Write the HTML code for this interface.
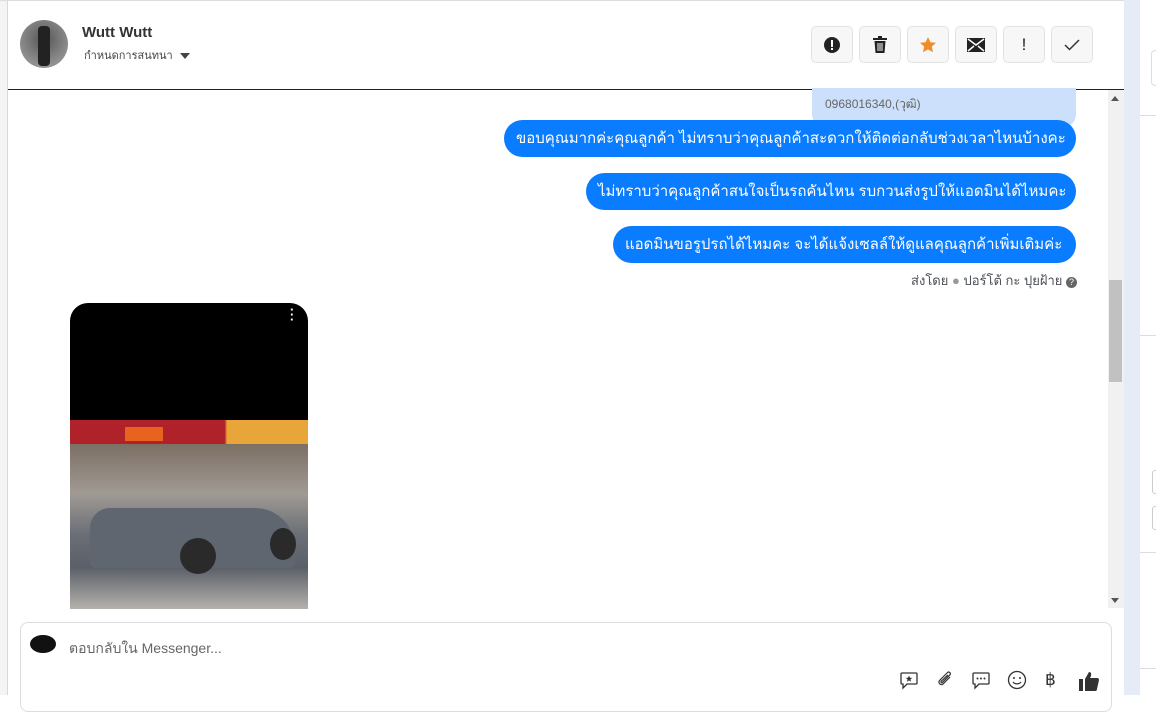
<!DOCTYPE html>
<html><head><meta charset="utf-8"><style>
*{box-sizing:border-box;margin:0;padding:0}
body{width:1156px;height:695px;overflow:hidden;background:#fff;font-family:"Liberation Sans","Noto Sans CJK SC",sans-serif;position:relative}
.abs{position:absolute}
.btn{position:absolute;top:26px;width:42px;height:37px;border:1px solid #e2e2e2;border-radius:5px;background:#f7f7f8;display:flex;align-items:center;justify-content:center}
.bub{position:absolute;right:80px;height:37px;border-radius:19px;background:#0a7cff;color:#fff;font-size:15px;line-height:37px;padding:0 12px;white-space:nowrap}
.ic{position:absolute;top:670px}
</style></head><body>
<div class="abs" style="left:0;top:0;width:8px;height:695px;background:#f4f4f4;border-right:1px solid #d8d8d8"></div>
<div class="abs" style="left:0;top:0;width:1124px;height:1px;background:#ddd"></div>
<div class="abs" style="left:20px;top:20px;width:48px;height:48px;border-radius:50%;background:radial-gradient(circle at 50% 40%,#555,#888 60%,#aaa)"></div>
<div class="abs" style="left:38px;top:26px;width:12px;height:40px;background:#222;border-radius:4px"></div>
<div class="abs" style="left:82px;top:24px;font-size:15px;font-weight:bold;color:#333">Wutt Wutt</div>
<div class="abs" style="left:84px;top:46px;font-size:11px;color:#444">กำหนดการสนทนา <span style="display:inline-block;width:0;height:0;border-left:5px solid transparent;border-right:5px solid transparent;border-top:6px solid #444;margin-left:4px"></span></div>
<div class="btn" style="left:811px"><svg width="18" height="18"><circle cx="9" cy="9" r="8" fill="#222"/><rect x="8" y="4" width="2" height="7" fill="#fff"/><rect x="8" y="12" width="2" height="2" fill="#fff"/></svg></div>
<div class="btn" style="left:859px"><svg width="16" height="18"><rect x="1" y="2" width="14" height="2" fill="#222"/><rect x="6" y="0" width="4" height="2" fill="#222"/><path d="M2.5 5h11l-1 12h-9z" fill="#222"/><path d="M6 7v8M8 7v8M10 7v8" stroke="#fff" stroke-width="1"/></svg></div>
<div class="btn" style="left:907px"><svg width="18" height="18"><path d="M9 1l2.4 5.2 5.6.6-4.2 3.8 1.2 5.6L9 13.4l-5 2.8 1.2-5.6L1 6.8l5.6-.6z" fill="#f28c28"/></svg></div>
<div class="btn" style="left:955px"><svg width="18" height="14"><rect x="0" y="0" width="18" height="14" fill="#222"/><path d="M1 1l8 6 8-6M1 13l6-5M17 13l-6-5" stroke="#fff" stroke-width="1.5" fill="none"/></svg></div>
<div class="btn" style="left:1003px;font-size:17px;color:#222">!</div>
<div class="btn" style="left:1051px"><svg width="16" height="12"><path d="M1 6l4.5 4.5L15 1" stroke="#333" stroke-width="1.5" fill="none"/></svg></div>
<div class="abs" style="left:8px;top:89px;width:1116px;height:1px;background:#222"></div>
<!-- scrollbar -->
<div class="abs" style="left:1108px;top:90px;width:16px;height:518px;background:#f1f1f1"></div>
<div class="abs" style="left:1109px;top:280px;width:13px;height:102px;background:#c1c1c1"></div>
<div class="abs" style="left:1111px;top:96px;width:0;height:0;border-left:4px solid transparent;border-right:4px solid transparent;border-bottom:5px solid #555"></div>
<div class="abs" style="left:1111px;top:598px;width:0;height:0;border-left:4px solid transparent;border-right:4px solid transparent;border-top:5px solid #555"></div>
<!-- right -->
<div class="abs" style="left:1124px;top:0;width:16px;height:695px;background:#e6ebf8"></div>
<div class="abs" style="left:1140px;top:115px;width:16px;height:1px;background:#ddd"></div>
<div class="abs" style="left:1140px;top:335px;width:16px;height:1px;background:#ddd"></div>
<div class="abs" style="left:1140px;top:552px;width:16px;height:1px;background:#ddd"></div>
<div class="abs" style="left:1140px;top:668px;width:16px;height:1px;background:#ddd"></div>
<div class="abs" style="left:1151px;top:50px;width:8px;height:36px;border:1px solid #ddd;border-radius:4px"></div>
<div class="abs" style="left:1152px;top:470px;width:8px;height:24px;border:1px solid #ccc;border-radius:3px"></div>
<div class="abs" style="left:1152px;top:506px;width:8px;height:24px;border:1px solid #ccc;border-radius:3px"></div>
<!-- messages -->
<div class="abs" style="left:812px;top:88px;width:264px;height:40px;border-radius:0 0 14px 14px;background:#cce0fb;color:#666;font-size:12px;padding:7px 13px">0968016340,(วุฒิ)</div>
<div class="bub" style="top:120px;width:572px">ขอบคุณมากค่ะคุณลูกค้า ไม่ทราบว่าคุณลูกค้าสะดวกให้ติดต่อกลับช่วงเวลาไหนบ้างคะ</div>
<div class="bub" style="top:173px;width:490px">ไม่ทราบว่าคุณลูกค้าสนใจเป็นรถคันไหน รบกวนส่งรูปให้แอดมินได้ไหมคะ</div>
<div class="bub" style="top:226px;width:463px">แอดมินขอรูปรถได้ไหมคะ จะได้แจ้งเซลล์ให้ดูแลคุณลูกค้าเพิ่มเติมค่ะ</div>
<div class="abs" style="right:79px;top:270px;font-size:13px;color:#4b4f56">ส่งโดย <span style="color:#999">●</span> ปอร์โต้ กะ ปุยฝ้าย <span style="display:inline-block;width:11px;height:11px;border-radius:50%;background:#666;color:#fff;font-size:9px;text-align:center;line-height:11px">?</span></div>
<!-- image -->
<div class="abs" style="left:70px;top:303px;width:238px;height:306px;border-radius:18px 18px 0 0;overflow:hidden;background:#000">
 <div class="abs" style="left:0;top:117px;width:238px;height:24px;background:linear-gradient(90deg,#b0222a 65%,#e8a53a 66%)"></div>
 <div class="abs" style="left:55px;top:124px;width:38px;height:14px;background:#e8631e"></div>
 <div class="abs" style="left:0;top:141px;width:238px;height:165px;background:linear-gradient(180deg,#7c6f64 0%,#a09a94 30%,#6a6e76 55%,#5b6068 75%,#b5b2ad 100%)"></div>
 <div class="abs" style="left:20px;top:205px;width:205px;height:60px;background:#5f6670;border-radius:20px 40px 6px 6px"></div>
 <div class="abs" style="left:110px;top:235px;width:36px;height:36px;border-radius:50%;background:#2a2a2a"></div>
 <div class="abs" style="left:200px;top:225px;width:26px;height:32px;border-radius:50%;background:#2a2a2a"></div>
 <div class="abs" style="left:220px;top:4px;color:#fff;font-size:13px;line-height:5px;font-weight:bold">·<br>·<br>·</div>
</div>
<!-- composer -->
<div class="abs" style="left:20px;top:622px;width:1092px;height:90px;border:1px solid #ddd;border-radius:8px"></div>
<div class="abs" style="left:30px;top:635px;width:26px;height:18px;border-radius:50%;background:#111"></div>
<div class="abs" style="left:69px;top:638px;font-size:14px;color:#666">ตอบกลับใน Messenger...</div>
<svg class="ic" style="left:899px" width="20" height="20"><path d="M3 3h14a1 1 0 011 1v9a1 1 0 01-1 1H8l-4 4v-4H3a1 1 0 01-1-1V4a1 1 0 011-1z" fill="none" stroke="#333" stroke-width="1.3"/><path d="M10 5.5l1 2.2 2.3.2-1.8 1.5.6 2.3-2.1-1.3-2.1 1.3.6-2.3-1.8-1.5 2.3-.2z" fill="#333"/></svg>
<svg class="ic" style="left:935px" width="20" height="20"><path d="M15 7l-7 7a2.5 2.5 0 01-3.5-3.5l8-8a1.7 1.7 0 012.4 2.4l-7.5 7.5a.8.8 0 01-1.2-1.2L13 5" fill="none" stroke="#333" stroke-width="1.2"/></svg>
<svg class="ic" style="left:971px" width="20" height="20"><path d="M3 3h14a1 1 0 011 1v9a1 1 0 01-1 1H8l-4 4v-4H3a1 1 0 01-1-1V4a1 1 0 011-1z" fill="none" stroke="#333" stroke-width="1.3"/><circle cx="6.5" cy="8.5" r="1" fill="#333"/><circle cx="10" cy="8.5" r="1" fill="#333"/><circle cx="13.5" cy="8.5" r="1" fill="#333"/></svg>
<svg class="ic" style="left:1007px" width="20" height="20"><circle cx="10" cy="10" r="8.5" fill="none" stroke="#333" stroke-width="1.3"/><circle cx="7" cy="8" r="1" fill="#333"/><circle cx="13" cy="8" r="1" fill="#333"/><path d="M6 12c2 2.5 6 2.5 8 0" fill="none" stroke="#333" stroke-width="1.2"/></svg>
<div class="abs" style="left:1045px;top:670px;font-size:17px;color:#333">฿</div>
<svg class="ic" style="left:1078px" width="22" height="22"><rect x="1" y="9" width="4" height="12" fill="#333"/><path d="M7 9l4-7c2 0 2.5 1.5 2 4l-1 2h7a2 2 0 012 2l-2 9a2 2 0 01-2 2H7z" fill="#333"/></svg>
</body></html>
